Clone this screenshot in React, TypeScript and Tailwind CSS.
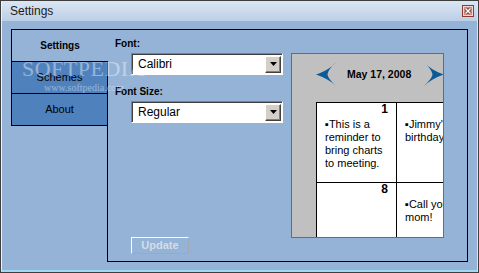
import React from "react";

const DropArrow = () => (
  <div className="flex h-[17px] w-[16px] shrink-0 items-center justify-center border border-t-white border-l-white border-r-[#404040] border-b-[#404040] bg-[#d4d0c8] shadow-[inset_-1px_-1px_0_#808080]">
    <svg width="7" height="4" viewBox="0 0 7 4">
      <polygon points="0,0 7,0 3.5,4" fill="#000" />
    </svg>
  </div>
);

const Select = ({ value }: { value: string }) => (
  <div className="ml-[16px] flex h-[22px] w-[152px] items-center justify-between border border-t-[#808080] border-l-[#808080] border-r-white border-b-white bg-white pl-[6px] pr-[1px] shadow-[inset_1px_1px_0_#404040] text-[12px] text-black">
    <span>{value}</span>
    <DropArrow />
  </div>
);

const Chevron = ({ flip }: { flip?: boolean }) => (
  <svg
    width="21"
    height="25"
    viewBox="0 0 21 25"
    className={flip ? "shrink-0 -scale-x-100" : "shrink-0"}
  >
    <path
      d="M20 0 C15 6 8 10 0 12.5 C8 15 15 19 21 25 C16 20 12 16 11.5 12.5 C12 9 15 5 20 0 Z"
      fill="#0c5a96"
    />
  </svg>
);

const days = [
  { n: "1", lines: ["▪This is a", "reminder to", "bring charts", "to meeting."] },
  { n: "2", lines: ["▪Jimmy's", "birthday"] },
  { n: "8", lines: [] },
  { n: "9", lines: ["▪Call your", "mom!"] },
];

const Calendar = () => (
  <div className="ml-[8px] mt-[15px] flex h-[185px] w-[153px] shrink-0 flex-col overflow-hidden border border-[#6b6b6b] bg-[#c0c0c0]">
    <div className="flex h-[40px] shrink-0 items-center pl-[24px]">
      <Chevron />
      <span className="ml-[10px] shrink-0 whitespace-nowrap text-[10.5px] font-bold leading-[12px] text-black">
        May 17, 2008
      </span>
      <div className="ml-[12px]">
        <Chevron flip />
      </div>
    </div>
    <div className="ml-[24px] mt-[8px] grid w-max shrink-0 grid-cols-[79px_79px] gap-px bg-black p-px">
      {days.map((d) => (
        <div key={d.n} className="h-[79px] bg-white">
          <div className="pr-[8px] text-right text-[12px] font-bold leading-[12px]">
            {d.n}
          </div>
          <div className="mt-[3px] pl-[8px] text-[11px] leading-[13px] whitespace-nowrap text-black">
            {d.lines.map((l) => (
              <div key={l}>{l}</div>
            ))}
          </div>
        </div>
      ))}
    </div>
  </div>
);

const App = () => {
  return (
    <div className="relative h-[273px] w-[479px] overflow-hidden border border-[#3e3e3e] font-['Liberation_Sans',Arial,sans-serif] text-black">
      <div className="flex h-full flex-col border-x border-b-2 border-l-[#eef3f9] border-r-[#d8e6f4] border-b-[#9fdcf2] bg-[#95b3d7]">
        {/* title bar */}
        <div className="flex h-[20px] shrink-0 items-center justify-between bg-gradient-to-b from-[#dbe6f3] to-[#bccfe6] pl-[8px] pr-[3px]">
          <span className="text-[12px] leading-[14px] text-[#1b1b1b]">Settings</span>
          <svg width="12" height="12" viewBox="0 0 12 12">
            <rect x="0.5" y="0.5" width="11" height="11" fill="#e9b3a8" stroke="#8c3b33" />
            <rect x="1.5" y="1.5" width="9" height="9" fill="#d88e80" stroke="#f6d8d0" />
            <path d="M3.5 3.5 L8.5 8.5 M8.5 3.5 L3.5 8.5" stroke="#5a2a25" strokeWidth="3" />
            <path d="M3.5 3.5 L8.5 8.5 M8.5 3.5 L3.5 8.5" stroke="#fff" strokeWidth="1.5" />
          </svg>
        </div>

        {/* body */}
        <div className="flex flex-1 px-[9px] pt-[8px] pb-[8px]">
          <div className="flex h-[233px] w-[457px]">
            {/* tabs */}
            <div className="flex w-[97px] shrink-0 flex-col">
              <div className="flex h-[32px] items-center justify-center border-l border-t border-black text-[10px] font-bold">
                Settings
              </div>
              <div className="flex h-[32px] items-center justify-center border-l border-t border-r border-black bg-[#4f81bd] text-[11px]">
                Schemes
              </div>
              <div className="flex h-[33px] items-center justify-center border border-black bg-[#4f81bd] text-[11px]">
                About
              </div>
              <div className="flex-1 border-r border-black" />
            </div>

            {/* content */}
            <div className="flex flex-1 border-t border-r border-b border-black pl-[7px] pt-[8px] pb-[7px]">
              <div className="flex w-[168px] shrink-0 flex-col">
                <div className="text-[10px] font-bold leading-[12px]">Font:</div>
                <div className="mt-[3px]">
                  <Select value="Calibri" />
                </div>
                <div className="mt-[11px] text-[10px] font-bold leading-[12px]">Font Size:</div>
                <div className="mt-[3px]">
                  <Select value="Regular" />
                </div>
                <button className="ml-[16px] mt-auto flex h-[17px] w-[58px] items-center justify-center border border-t-white border-l-white border-r-[#a3a9b1] border-b-[#a3a9b1] text-[11px] font-bold text-[#d4dce7]">
                  Update
                </button>
              </div>
              <Calendar />
            </div>
          </div>
        </div>
      </div>

      {/* watermark */}
      <div className="pointer-events-none absolute left-[21px] top-[55px] font-['Liberation_Serif',serif] text-white opacity-40">
        <div className="text-[22px] leading-[26px] tracking-[0.5px]">SOFTPEDIA</div>
        <div className="ml-[22px] text-[10px] leading-[12px]">www.softpedia.com</div>
      </div>
    </div>
  );
};

export default App;
